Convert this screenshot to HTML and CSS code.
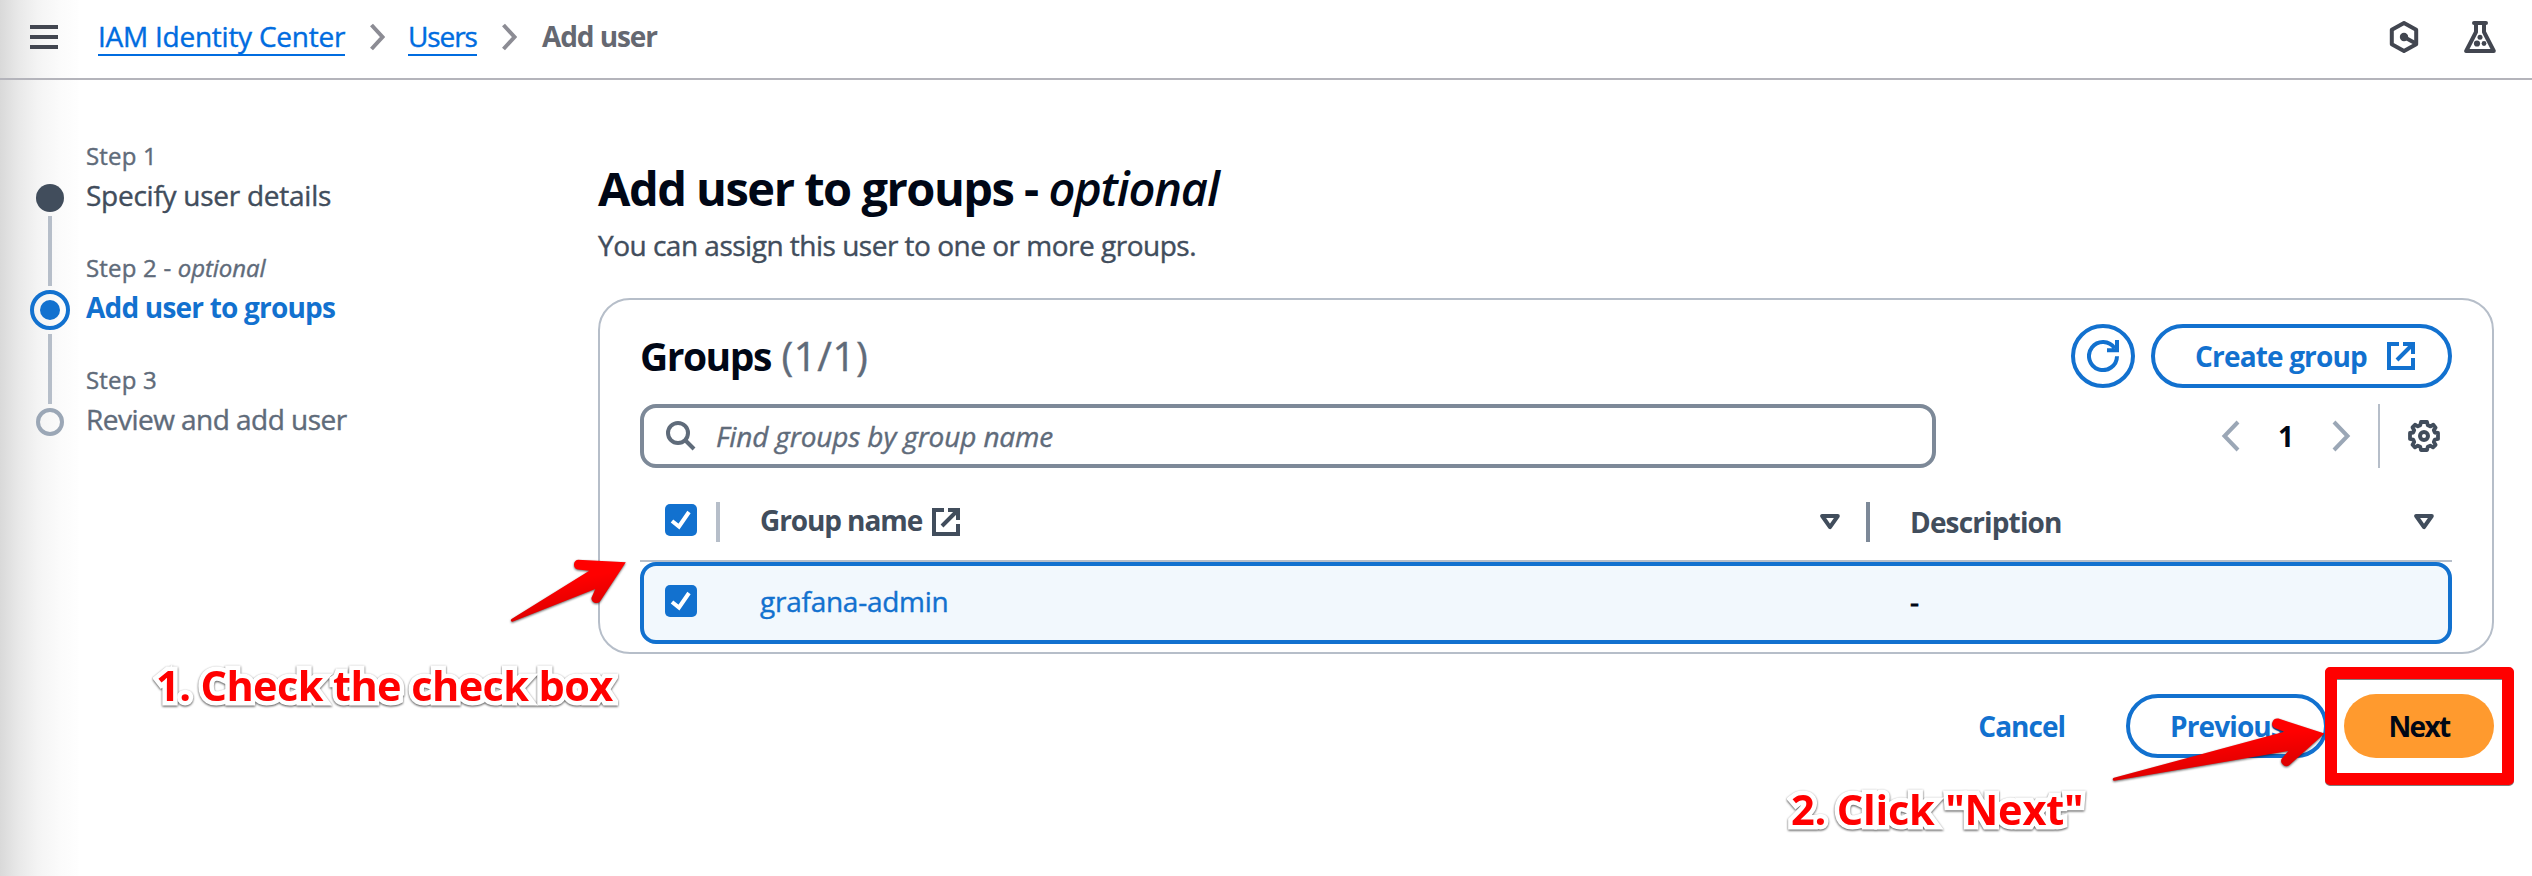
FILE: index.html
```html
<!DOCTYPE html>
<html lang="en">
<head>
<meta charset="utf-8">
<title>Add user to groups</title>
<link rel="stylesheet" href="styles.css">
</head>
<body>
<header class="topbar">
  <svg class="menu" width="28" height="24" viewBox="0 0 28 24"><path d="M0 2h28M0 12h28M0 22h28" stroke="#424650" stroke-width="4"/></svg>
  <nav class="crumbs">
    <a class="crumb crumb-iam">IAM Identity Center</a>
    <svg class="sep" width="15" height="28" viewBox="0 0 15 28"><path d="M1.5 2 12.5 14 1.5 26" fill="none" stroke="#8c8c94" stroke-width="4"/></svg>
    <a class="crumb crumb-users">Users</a>
    <svg class="sep" width="15" height="28" viewBox="0 0 15 28"><path d="M1.5 2 12.5 14 1.5 26" fill="none" stroke="#8c8c94" stroke-width="4"/></svg>
    <span class="current">Add user</span>
  </nav>
  <div class="tools">
    <svg width="32" height="32" viewBox="0 0 32 32"><path d="M16 2 28.2 8.8V23.2L16 30 3.8 23.2V8.8Z" fill="none" stroke="#424650" stroke-width="4" stroke-linejoin="round"/><circle cx="16" cy="16" r="4.2" fill="#424650"/><path d="M16 16 27 22" stroke="#424650" stroke-width="4"/></svg>
    <svg width="32" height="32" viewBox="0 0 32 32"><path d="M10 2h12M12 2v9L2.2 30H29.8L20 11V2" fill="none" stroke="#424650" stroke-width="4" stroke-linecap="round" stroke-linejoin="round"/><circle cx="16" cy="16.3" r="2.5" fill="#424650"/><circle cx="13" cy="22.5" r="3.1" fill="#424650"/><circle cx="20" cy="22.5" r="2.4" fill="#424650"/></svg>
  </div>
</header>
<main class="page">
  <aside class="wizard">
    <div class="track">
      <span class="dot done"></span><span class="line"></span>
      <span class="dot active"></span><span class="line"></span>
      <span class="dot todo"></span>
    </div>
    <ol class="steps">
      <li><div class="label">Step 1</div><div class="name s1">Specify user details</div></li>
      <li><div class="label">Step 2 - <em>optional</em></div><div class="name s2">Add user to groups</div></li>
      <li><div class="label">Step 3</div><div class="name s3">Review and add user</div></li>
    </ol>
  </aside>
  <section class="content">
    <h1>Add user to groups - <em>optional</em></h1>
    <p class="desc">You can assign this user to one or more groups.</p>
    <div class="card">
      <div class="card-head">
        <h2>Groups <span>(1/1)</span></h2>
        <button class="btn round"><svg width="32" height="32" viewBox="0 0 32 32"><path d="M30 16.2A14 14 0 1 1 27.6 8.2M30 0v10.2H20" fill="none" stroke="#1271cf" stroke-width="4"/></svg></button>
        <button class="btn create">Create group<svg width="28" height="28" viewBox="0 0 28 28"><path d="M12 2H2V26H26V16M16 2H26V12M25 3 10 18" fill="none" stroke="#1271cf" stroke-width="4"/></svg></button>
      </div>
      <div class="filters">
        <div class="search">
          <svg width="30" height="30" viewBox="0 0 30 30"><circle cx="12" cy="12" r="10" fill="none" stroke="#5f6b7a" stroke-width="4"/><path d="M19 19 28 28" stroke="#5f6b7a" stroke-width="4"/></svg>
          <span>Find groups by group name</span>
        </div>
        <div class="pager">
          <svg width="19" height="32" viewBox="0 0 19 32"><path d="M17 2 3.5 16 17 30" fill="none" stroke="#9ba7b6" stroke-width="4"/></svg>
          <b>1</b>
          <svg width="19" height="32" viewBox="0 0 19 32"><path d="M2 2 15.5 16 2 30" fill="none" stroke="#9ba7b6" stroke-width="4"/></svg>
        </div>
        <div class="prefs">
          <svg width="32" height="32" viewBox="0 0 32 32"><path d="M13 2H19L19.8 5.2 22.5 6.4 25.3 4.7 27.6 7.6 25.8 10.2 26.8 12.5 30 13V19L26.8 19.6 25.8 22 27.6 24.8 25 27.4 22.2 25.7 19.8 26.8 19 30H13L12.2 26.8 9.8 25.7 7 27.4 4.5 24.8 6.2 22 5.2 19.6 2 19V13L5.2 12.5 6.2 10.2 4.5 7.4 7 4.7 9.8 6.4 12.2 5.2Z" fill="none" stroke="#414d5c" stroke-width="3.8" stroke-linejoin="round"/><circle cx="16" cy="16" r="4" fill="none" stroke="#414d5c" stroke-width="4"/></svg>
        </div>
      </div>
      <div class="row thead">
        <span class="check"><svg width="32" height="32" viewBox="0 0 32 32"><path d="M7 17 14 22.5 24 8" fill="none" stroke="#fff" stroke-width="4"/></svg></span>
        <i class="divider light"></i>
        <div class="col-name">Group name<svg width="28" height="28" viewBox="0 0 28 28"><path d="M12 2H2V26H26V16M16 2H26V12M25 3 10 18" fill="none" stroke="#414d5c" stroke-width="4"/></svg></div>
        <svg class="sort" width="20" height="16" viewBox="0 0 20 16"><path d="M2.2 2H17.8L10 13.2Z" fill="none" stroke="#414d5c" stroke-width="4" stroke-linejoin="round"/></svg>
        <i class="divider"></i>
        <div class="col-desc">Description</div>
        <svg class="sort last" width="20" height="16" viewBox="0 0 20 16"><path d="M2.2 2H17.8L10 13.2Z" fill="none" stroke="#414d5c" stroke-width="4" stroke-linejoin="round"/></svg>
      </div>
      <div class="row selected">
        <span class="check"><svg width="32" height="32" viewBox="0 0 32 32"><path d="M7 17 14 22.5 24 8" fill="none" stroke="#fff" stroke-width="4"/></svg></span>
        <a class="group-link">grafana-admin</a>
        <span class="cell-desc">-</span>
      </div>
    </div>
    <div class="actions">
      <a class="cancel">Cancel</a>
      <button class="btn prev">Previous</button>
      <button class="btn next">Next</button>
    </div>
  </section>
</main>
<svg class="marks" width="2532" height="876" viewBox="0 0 2532 876">
  <defs>
    <linearGradient id="red" x1="0" y1="0" x2="0.35" y2="1"><stop offset=".45" stop-color="#ff0000"/><stop offset="1" stop-color="#d80000"/></linearGradient>
  </defs>
  <path fill="url(#red)" d="M511.5 619 589.3 570.8 578 569.6A5 5 0 0 1 578 559.8L625.8 562.2 600 601.5A5 5 0 0 1 591.4 598L595.3 589 513 621.5A1.4 1.4 0 0 1 511.5 619Z"/>
  <path fill="url(#red)" d="M2114 777.8 2284.3 731.8 2274.5 728A5.2 5.2 0 0 1 2278.5 718.6L2324.5 733.4 2289.5 765A5.2 5.2 0 0 1 2281.5 759L2288.3 751 2114.5 780.8A1.5 1.5 0 0 1 2114 777.8Z"/>
</svg>
<div class="frame"></div>
<div class="note note-1">1. Check the check box</div>
<div class="note note-2">2. Click "Next"</div>
</body>
</html>
```
FILE: styles.css
```css
* { box-sizing: border-box; margin: 0; padding: 0; }
body {
  position: relative;
  width: 2532px;
  height: 876px;
  overflow: hidden;
  font: 400 28px/40px "Open Sans", "Noto Sans", sans-serif;
  color: #000716;
  background: #fff linear-gradient(90deg, #d9d9d9 0, #e8e8e8 18px, #f4f4f4 38px, #fbfbfb 60px, #fefefe 78px, #fff 79px) 0 0 / 80px 100% no-repeat;
}
svg { display: block; flex: none; }
em { font-style: italic; }
button { font: inherit; }

.crumb, .label, .s1, .s3, .desc, .search, .group-link, .cell-desc, h2 span {
  -webkit-text-stroke: .4px currentColor;
}

.topbar {
  display: flex;
  align-items: flex-start;
  height: 80px;
  padding: 16px 36px 0 30px;
  border-bottom: 2px solid #b4b4bb;
}
.menu { margin: 9px 40px 0 0; }
.crumbs { display: flex; flex: 1; }
.crumb {
  height: 40px;
  padding-top: 2px;
  line-height: 36px;
  color: #006ce0;
  border-bottom: 2px solid #006ce0;
  white-space: nowrap;
}
.crumb-iam { width: 247px; letter-spacing: -.25px; }
.crumb-users { width: 69px; margin-left: -2px; letter-spacing: -1.1px; }
.sep { margin: 7px 25px 0; }
.current { font-weight: 700; color: #656871; letter-spacing: -1.1px; }
.tools { display: flex; gap: 44px; padding-top: 5px; }

.page { display: flex; padding: 0 38px 0 30px; }
.wizard { display: flex; width: 568px; }
.track {
  display: flex;
  flex-direction: column;
  align-items: center;
  gap: 4px;
  width: 40px;
  padding-top: 104px;
}
.dot { width: 28px; height: 28px; border-radius: 50%; }
.done { background: #414d5c; }
.todo { border: 4px solid #9ba7b6; }
.active {
  width: 40px;
  height: 40px;
  padding: 6px;
  border: 4px solid #1271cf;
  background: #1271cf content-box;
}
.line { width: 4px; height: 70px; background: #b6bec9; }
.steps { list-style: none; padding: 58px 0 0 16px; white-space: nowrap; }
.steps li { height: 112px; }
.label { font-size: 24px; line-height: 36px; color: #5f6b7a; letter-spacing: .2px; }
.label em { letter-spacing: -.1px; }
.name { line-height: 42px; }
.s1 { color: #414d5c; letter-spacing: -.26px; }
.s2 { color: #1271cf; font-weight: 700; letter-spacing: -.8px; }
.s3 { color: #5f6b7a; letter-spacing: -.53px; }

.content { flex: 1; padding-top: 78px; }
h1 { font-size: 47px; line-height: 60px; letter-spacing: -1.5px; }
h1 em { font-weight: 600; letter-spacing: -1.2px; }
.desc { margin-top: 7px; color: #414d5c; letter-spacing: -.5px; }
.card {
  height: 356px;
  margin-top: 33px;
  padding: 24px 40px 8px;
  border: 2px solid #b6bec9;
  border-radius: 32px;
}
.card-head { display: flex; gap: 16px; height: 64px; }
h2 { flex: 1; font-size: 39px; line-height: 64px; letter-spacing: -1.5px; }
h2 span { margin-left: 2px; font-size: 40px; font-weight: 400; color: #5f6b7a; letter-spacing: .6px; }
.btn {
  display: flex;
  align-items: center;
  justify-content: center;
  height: 64px;
  border: 4px solid #1271cf;
  border-radius: 32px;
  background: none;
  color: #1271cf;
  font-weight: 700;
  line-height: 56px;
  letter-spacing: -.9px;
}
.round { width: 64px; }
.create { width: 301px; gap: 20px; padding-left: 7px; letter-spacing: -.85px; }

.filters { display: flex; height: 64px; margin-top: 16px; }
.search {
  display: flex;
  align-items: center;
  width: 1296px;
  padding-left: 22px;
  border: 4px solid #7d8998;
  border-radius: 16px;
  color: #5f6b7a;
  font-style: italic;
  letter-spacing: -.14px;
}
.search svg { margin: 0 20px 0 0; }
.pager { display: flex; align-items: center; gap: 38px; margin-left: auto; padding-right: 27px; }
.prefs { display: flex; align-items: center; width: 74px; padding-left: 28px; border-left: 2px solid #b6bec9; }

.row { display: flex; align-items: center; }
.thead {
  height: 94px;
  padding: 12px 18px 0 25px;
  border-bottom: 2px solid #b6bec9;
  color: #414d5c;
  font-weight: 700;
}
.check { flex: none; width: 32px; height: 32px; border-radius: 5px; background: #1271cf; }
.divider { width: 4px; height: 40px; margin-top: 4px; background: #7d8998; }
.light { margin-left: 19px; background: #b6bec9; }
.col-name { display: flex; align-items: center; gap: 10px; flex: 1; padding-left: 40px; letter-spacing: -1.1px; }
.col-name svg { margin-top: 3px; }
.sort { margin: 4px 26px 0 0; }
.last { margin-right: 0; }
.col-desc { width: 544px; padding: 3px 0 0 40px; letter-spacing: -.85px; }
.selected {
  height: 82px;
  padding: 0 0 4px 21px;
  border: 4px solid #1271cf;
  border-radius: 16px;
  background: #f2f8fd;
}
.group-link { width: 1150px; padding-left: 63px; color: #1271cf; letter-spacing: -.25px; }
.cell-desc { padding-left: 63px; -webkit-text-stroke-width: .8px; }

.actions { display: flex; align-items: center; justify-content: flex-end; gap: 16px; height: 64px; margin-top: 40px; }
.cancel { padding: 0 45px 0 44px; color: #1271cf; font-weight: 700; letter-spacing: -1px; }
.prev { width: 202px; }
.next { width: 150px; border: 0; background: #ff9a2e; color: #000716; line-height: 64px; letter-spacing: -1.6px; }

.marks { position: absolute; left: 0; top: 0; filter: drop-shadow(0 1px 1px rgba(0, 0, 0, .6)); }
.frame {
  position: absolute;
  left: 2325px;
  top: 667px;
  width: 189px;
  height: 118px;
  border: 12px solid #f00;
  border-radius: 5px;
  filter: drop-shadow(0 1px 0 rgba(0, 0, 0, .5));
}
.note {
  position: absolute;
  font-size: 41.5px;
  font-weight: 700;
  line-height: 60px;
  color: #f00;
  white-space: nowrap;
  -webkit-text-stroke: 9px #fff;
  paint-order: stroke fill;
  filter: drop-shadow(0 1px 1px rgba(0, 0, 0, .7));
}
.note-1 { left: 156px; top: 655px; letter-spacing: -.6px; }
.note-2 { left: 1791px; top: 779px; letter-spacing: -.2px; }
```
